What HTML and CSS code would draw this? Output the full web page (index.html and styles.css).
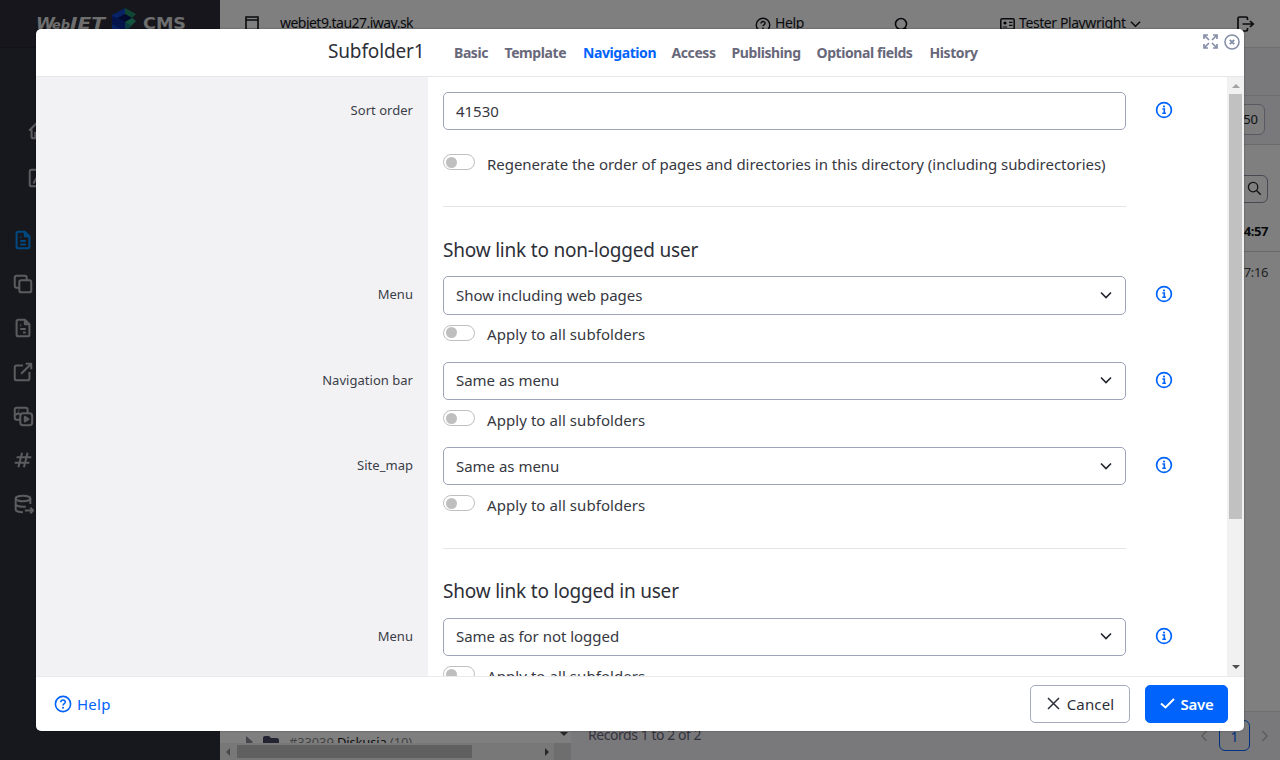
FILE: index.html
```
<!DOCTYPE html>
<html lang="en">
<head>
<meta charset="utf-8">
<title>WebJET CMS</title>
<link rel="stylesheet" href="styles.css">
</head>
<body>
<svg width="0" height="0" class="defs">
  <defs>
    <symbol id="info" viewBox="0 0 18 18"><circle cx="9" cy="9" r="7.4" fill="none" stroke="currentColor" stroke-width="1.7"/><path d="M7.400 8h1.900v4M7.300 12.200h3.600" fill="none" stroke="currentColor" stroke-width="1.600"/><circle cx="9" cy="5.500" r="1.100" fill="currentColor"/></symbol>
    <symbol id="help" viewBox="0 0 18 18"><circle cx="9" cy="9" r="7.6" fill="none" stroke="currentColor" stroke-width="1.6"/><path d="M6.7 7.2c0-3 4.8-2.8 4.6 0C11.2 8.700 9 8.700 9 10.500" fill="none" stroke="currentColor" stroke-width="1.5"/><circle cx="9" cy="12.8" r="1" fill="currentColor"/></symbol>
    <symbol id="chev" viewBox="0 0 12 8"><path d="M1 1.500l5 5 5-5" fill="none" stroke="currentColor" stroke-width="1.6"/></symbol>
    <symbol id="search" viewBox="0 0 16 16"><circle cx="6.500" cy="6.500" r="5" fill="none" stroke="currentColor" stroke-width="1.400"/><path d="M10.200 10.200l4.500 4.500" stroke="currentColor" stroke-width="1.500"/></symbol>
  </defs>
</svg>
<div class="app">
  <aside class="side">
    <div class="brand">
      <svg width="150" height="32" viewBox="0 0 150 32">
        <g fill="#ddd" font-family="DejaVu Sans" font-weight="bold">
          <text x="0" y="29" font-size="16" font-style="italic" textLength="19" lengthAdjust="spacingAndGlyphs">W</text>
          <text x="16" y="29" font-size="12" font-style="italic" textLength="18" lengthAdjust="spacingAndGlyphs">eb</text>
          <text x="34" y="29" font-size="16" font-style="italic" textLength="35" lengthAdjust="spacingAndGlyphs">JET</text>
          <text x="107" y="29" font-size="16" textLength="43" lengthAdjust="spacingAndGlyphs">CMS</text>
        </g>
        <path d="M89 8L76 15v18l13-6z" fill="#1044c8"/><path d="M76 16l13 6v9l-13-7z" fill="#0a2896"/>
        <path d="M89 8l11 6-4 4-7-4z" fill="#208c68"/><path d="M89 14l7 4-7 4-8-4z" fill="#061860"/><path d="M89 22l7-4 4 3-4 4-7 7z" fill="#24a87b"/><path d="M89 22l7 4-7 5z" fill="#187684"/>
      </svg>
    </div>
    <nav class="menu">
      <svg class="mi first" viewBox="0 0 24 24"><path d="M5 12H3l9-9 9 9h-2v7a2 2 0 0 1-2 2H7a2 2 0 0 1-2-2zM9 21v-6h6v6"/></svg>
      <svg class="mi first" viewBox="0 0 24 24"><rect x="3" y="3" width="18" height="18" rx="2"/><path d="M7 18l5-9 4 7 3-6"/></svg>
      <svg class="mi on" viewBox="0 0 24 24"><path d="M14 3v5h5M5 5a2 2 0 0 1 2-2h7l5 5v11a2 2 0 0 1-2 2H7a2 2 0 0 1-2-2zM9 9h1M9 13h6M9 17h6"/></svg>
      <svg class="mi" viewBox="0 0 24 24"><rect x="8" y="8" width="13" height="13" rx="2"/><path d="M16 8V5a2 2 0 0 0-2-2H5a2 2 0 0 0-2 2v9a2 2 0 0 0 2 2h3"/></svg>
      <svg class="mi" viewBox="0 0 24 24"><path d="M14 3v5h5M5 5a2 2 0 0 1 2-2h7l5 5v11a2 2 0 0 1-2 2H7a2 2 0 0 1-2-2zM9 9h1M9 13h6M12 17h3"/></svg>
      <svg class="mi" viewBox="0 0 24 24"><path d="M12 5H5a2 2 0 0 0-2 2v12a2 2 0 0 0 2 2h12a2 2 0 0 0 2-2v-7M10 14L21 3M15 3h6v6"/></svg>
      <svg class="mi" viewBox="0 0 24 24"><rect x="9" y="9" width="13" height="13" rx="3"/><path d="M17 9V5a2 2 0 0 0-2-2H5a2 2 0 0 0-2 2v9a2 2 0 0 0 2 2h4M3 11l4-2 3 2M7 6h1M14 13v5l4-2.500z"/></svg>
      <svg class="mi" viewBox="0 0 24 24"><path d="M5 9h16M3 15h16M11 4L7 20M17 4l-4 16"/></svg>
      <svg class="mi" viewBox="0 0 24 24"><ellipse cx="12" cy="6" rx="8" ry="3"/><path d="M4 6v12c0 1.700 3.600 3 8 3M20 6v6M4 12c0 1.700 3.600 3 8 3 1 0 2 0 3-.3M14 19h9M20 16l3 3-3 3"/></svg>
    </nav>
  </aside>
  <main class="page">
    <header class="top">
      <svg class="win" width="14" height="14" viewBox="0 0 14 14"><path d="M1 1h12v12.500H1zM1 4h12" fill="none" stroke="currentColor" stroke-width="1.600"/></svg>
      <span class="t domain">webjet9.tau27.iway.sk</span>
      <svg class="tophelp" width="16" height="16"><use href="#help"/></svg><span class="t">Help</span>
      <svg class="topsearch" width="15" height="15" viewBox="0 0 15 15"><circle cx="7" cy="7" r="5.500" fill="none" stroke="currentColor" stroke-width="1.600"/><path d="M10.500 10.500l3 3" stroke="currentColor" stroke-width="1.600"/></svg>
      <svg class="card" width="15" height="12" viewBox="0 0 15 12"><rect x=".8" y=".8" width="13.400" height="10.400" rx="1.500" fill="none" stroke="currentColor" stroke-width="1.500"/><circle cx="5" cy="5" r="1.600"/><path d="M2.800 9h4.400M9 4.300h3.500M9 7.300h3.500" stroke="currentColor" stroke-width="1.200"/></svg><span class="t user">Tester Playwright</span><svg class="userchev" width="11" height="8"><use href="#chev"/></svg>
      <svg class="exit" width="18" height="16" viewBox="0 0 18 16"><path d="M10.500 4V2.500a1.500 1.500 0 0 0-1.500-1.500H2.500A1.500 1.500 0 0 0 1 2.500v11A1.500 1.500 0 0 0 2.500 15H9a1.500 1.500 0 0 0 1.500-1.500V12M5.500 8H16M13 5l3.200 3L13 11" fill="none" stroke="currentColor" stroke-width="1.700"/></svg>
    </header>
    <div class="strip"></div>
    <div class="tools"><span class="num">50</span></div>
    <div class="table">
      <div class="filter"><span class="fbox"><svg width="15" height="15"><use href="#search"/></svg></span></div>
      <div class="tr strong">4:57</div>
      <div class="tr">7:16</div>
    </div>
    <div class="bottom">
      <div class="tree">
        <div class="node"><svg width="7" height="11"><path d="M0 0l7 6-7 5z" fill="#8a8b98"/></svg><svg width="16" height="12"><path d="M0 2q0-2 2-2h4l2 2h6q2 0 2 2v8H0z" fill="#464963"/></svg><span>#33039 <b>Diskusia</b> (10)</span><i class="tri down"></i></div>
        <div class="hbar"><i class="tri left"></i><span class="hthumb"></span><i class="tri right"></i><span class="corner"></span></div>
      </div>
      <div class="records"><span class="rec">Records 1 to 2 of 2</span><svg class="pg" width="8" height="12" viewBox="0 0 8 12"><path d="M6.500 1L2 6l4.500 5"/></svg><span class="one">1</span><svg class="pg" width="8" height="12" viewBox="0 0 8 12"><path d="M1.500 1L6 6l-4.500 5"/></svg></div>
    </div>
  </main>
</div>
<div class="shade"></div>
<section class="modal">
  <header class="mhead">
    <h1>Subfolder1</h1>
    <nav class="tabs"><a class="w1">Basic</a><a class="w2">Template</a><a class="w3 active">Navigation</a><a class="w4">Access</a><a class="w5">Publishing</a><a class="w6">Optional fields</a><a class="w7">History</a></nav>
    <div class="winbtns">
      <svg width="15" height="15" viewBox="0 0 15 15"><path d="M1 5V1h4M10 1h4v4M14 10v4h-4M5 14H1v-4M1.500 1.500L6 6M13.500 1.500L9 6M13.500 13.500L9 9M1.500 13.500L6 9" fill="none" stroke="currentColor" stroke-width="1.700"/></svg>
      <svg width="16" height="16" viewBox="0 0 16 16"><circle cx="8" cy="8" r="7" fill="none" stroke="currentColor" stroke-width="1.600"/><path d="M5.800 5.800l4.400 4.400M10.200 5.800l-4.400 4.400" stroke="currentColor" stroke-width="1.900"/></svg>
    </div>
  </header>
  <div class="mbody">
    <div class="form">
      <div class="group">
        <div class="row">
          <label>Sort order</label>
          <div class="field"><div class="input">41530</div><div class="check regen"><span class="switch"></span><span class="long">Regenerate the order of pages and directories in this directory (including subdirectories)</span></div></div>
          <svg class="info"><use href="#info"/></svg>
        </div>
        <hr>
      </div>
      <h2>Show link to non-logged user</h2>
      <div class="row sel"><label>Menu</label><div class="field"><div class="input">Show including web pages<svg class="chev"><use href="#chev"/></svg></div><div class="check"><span class="switch"></span><span>Apply to all subfolders</span></div></div><svg class="info"><use href="#info"/></svg></div>
      <div class="row sel"><label>Navigation bar</label><div class="field"><div class="input">Same as menu<svg class="chev"><use href="#chev"/></svg></div><div class="check"><span class="switch"></span><span>Apply to all subfolders</span></div></div><svg class="info"><use href="#info"/></svg></div>
      <div class="row sel"><label>Site_map</label><div class="field"><div class="input">Same as menu<svg class="chev"><use href="#chev"/></svg></div><div class="check"><span class="switch"></span><span>Apply to all subfolders</span></div></div><svg class="info"><use href="#info"/></svg></div>
      <hr class="second">
      <h2>Show link to logged in user</h2>
      <div class="row sel"><label>Menu</label><div class="field"><div class="input">Same as for not logged<svg class="chev"><use href="#chev"/></svg></div><div class="check"><span class="switch"></span><span>Apply to all subfolders</span></div></div><svg class="info"><use href="#info"/></svg></div>
    </div>
    <div class="vbar"><i class="tri up"></i><span class="vthumb"></span><i class="tri down"></i></div>
  </div>
  <footer class="mfoot">
    <a class="helplink"><svg width="18" height="18"><use href="#help"/></svg>Help</a>
    <button class="btn"><svg width="13" height="13" viewBox="0 0 13 13"><path d="M1 1l11 11M12 1L1 12" stroke="currentColor" stroke-width="1.500"/></svg>Cancel</button>
    <button class="btn save"><svg width="15" height="11" viewBox="0 0 15 11"><path d="M1 5.500l4.500 4L14 1" fill="none" stroke="currentColor" stroke-width="2"/></svg>Save</button>
  </footer>
</section>
</body>
</html>
```
FILE: styles.css
```
* { box-sizing: border-box; }
body { margin: 0; width: 1280px; height: 760px; overflow: hidden; position: relative; font-family: "Noto Sans", sans-serif; font-size: 15px; color: #212529; }
svg { display: block; flex: none; }
.defs { position: absolute; }

.app { display: flex; height: 760px; }
.side { width: 220px; background: #2e303c; }
.brand { height: 48px; padding-left: 36px; background: #2c2d38; border-bottom: 1px solid #23242e; }
.menu { padding: 71px 0 0 12px; display: flex; flex-direction: column; }
.mi { width: 22px; height: 22px; margin-bottom: 22px; fill: none; stroke: #b8b8be; stroke-width: 2.2; stroke-linejoin: round; }
.mi.first { margin: 0 0 26px 15px; }
.mi.first + .mi.on { margin-top: 14px; }
.mi.on { stroke: #0090ff; }

.page { flex: 1; display: flex; flex-direction: column; background: #fff; min-width: 0; }
.top { height: 48px; display: flex; border-bottom: 1px solid #dcdde0; padding: 16px 0 0 25px; color: #13151b; }
.t { font-size: 14px; line-height: 14px; white-space: nowrap; letter-spacing: -.35px; }
.domain { margin-left: 21px; width: 134px; letter-spacing: -.53px; }
.tophelp { margin: 1px 4px 0 341px; }
.topsearch { margin: 1px 0 0 90px; }
.card { margin: 2px 4px 0 91px; }
.user { width: 108px; letter-spacing: -.42px; }
.userchev { margin: 4px 0 0 3px; }
.exit { margin-left: 96px; }
.strip { height: 48px; background: #f3f3f6; border-bottom: 1px solid #dcdde0; }
.tools { height: 49px; background: #f3f3f6; border-bottom: 1px solid #d2d4dc; display: flex; justify-content: flex-end; padding: 8px 15px; }
.num { width: 45px; height: 31px; border: 1px solid #b0b3c5; border-radius: 6px; text-align: right; padding-right: 6px; line-height: 29px; font-size: 13px; background: #fafafa; }
.table { height: 566px; }
.filter { height: 66px; padding: 30px 12px 0; display: flex; justify-content: flex-end; }
.fbox { width: 50px; height: 28px; border: 1px solid #8d91a8; border-radius: 6px; display: flex; justify-content: flex-end; padding: 5px 5px; }
.tr { height: 41px; padding-right: 12px; text-align: right; line-height: 41px; font-size: 13px; letter-spacing: -.4px; color: #444; }
.strong { font-weight: 700; color: #13151b; border-bottom: 1px solid #cfd0d8; }
.bottom { flex: 1; display: flex; }
.tree { width: 351px; background: #fff; }
.node { height: 32px; padding: 25px 3px 0 26px; display: flex; font-size: 13px; line-height: 13px; color: #888; overflow: hidden; gap: 10px; letter-spacing: -.15px; }
.node span { width: 265px; white-space: nowrap; }
.node b { font-weight: 400; color: #222; }
.node .tri { margin: -4px 0 0 -3px; }
.hbar { height: 17px; background: #f1f1f1; display: flex; align-items: center; padding-left: 6px; }
.hthumb { width: 235px; height: 13px; background: #c1c1c1; margin-left: 7px; }
.hbar .right { margin-left: 73px; }
.corner { width: 17px; height: 17px; background: #dcdcdc; margin-left: auto; }
.records { flex: 1; background: #f3f3f6; border-top: 1px solid #dcdde0; display: flex; padding: 16px 11px 0 17px; color: #68687a; }
.rec { margin-right: auto; font-size: 14px; line-height: 14px; letter-spacing: -.45px; }
.pg { fill: none; stroke: #bbb; stroke-width: 1.5; margin-top: 2px; }
.one { width: 31px; height: 31px; margin: -8px 11px 0; border: 1px solid #0063fb; border-radius: 6px; text-align: center; line-height: 31px; font-size: 14px; color: #0063fb; }

.tri { display: block; width: 0; height: 0; border: 4px solid transparent; flex: none; }
.tri.up { border-top: 0; border-bottom-color: #a3a3a3; }
.tri.down { border-bottom: 0; border-top-color: #505050; }
.tri.left { border-left: 0; border-right-color: #909090; }
.tri.right { border-right: 0; border-left-color: #505050; }

.shade { position: absolute; inset: 0; background: rgba(0, 0, 0, .5); }
.modal { position: absolute; left: 36px; top: 29px; width: 1208px; height: 702px; background: #fff; border-radius: 5px; overflow: hidden; display: flex; flex-direction: column; box-shadow: 0 0 2px rgba(0, 0, 0, .4); }
.mhead { height: 48px; border-bottom: 1px solid #e6e7ea; display: flex; padding-left: 292px; flex: none; }
h1 { margin: 0; width: 126px; font-size: 19px; font-weight: 400; line-height: 44px; letter-spacing: -.15px; color: #2d2f38; }
.tabs { display: flex; font-size: 14px; font-weight: 700; line-height: 47px; color: #68687a; letter-spacing: -.42px; white-space: nowrap; }
.w1 { width: 50.5px; }
.w2 { width: 78.5px; }
.w3 { width: 88.5px; }
.w4 { width: 60px; }
.w5 { width: 85px; }
.w6 { width: 113px; }
.w7 { width: 50px; }
.active { color: #0063fb; }
.winbtns { margin-left: auto; padding: 5px 4px 0 0; display: flex; gap: 6px; color: #868ea8; }
.mbody { height: 599px; flex: none; display: flex; overflow: hidden; }
.form { flex: 1; padding-top: 15px; background: linear-gradient(to right, #f2f2f5 392px, #fff 392px); }
.group { height: 115.4px; }
.row { display: grid; grid-template-columns: 377px 30px 683px 29px 18px; height: 114.4px; }
.row label { grid-column: 1; text-align: right; font-size: 13px; line-height: 37px; letter-spacing: .03px; color: #3b3d48; }
.sel { height: 85.33px; }
.field { grid-column: 3; }
.info { grid-column: 5; width: 18px; height: 18px; margin: 9px 0 0 -.5px; color: #0063fb; }
.input { height: 38.4px; border: 1px solid #9da4b8; border-radius: 5px; padding: 0 12px; display: flex; align-items: center; justify-content: space-between; letter-spacing: -.02px; color: #363841; }
.sel .input { padding-bottom: 1px; }
.chev { width: 12px; height: 8px; margin-right: 1px; color: #22242c; }
.check { height: 20px; margin-top: 9.4px; display: flex; align-items: center; gap: 12px; line-height: 20px; letter-spacing: .07px; color: #363841; white-space: nowrap; }
.check.regen { margin-top: 23.6px; }
.long { letter-spacing: -.03px; }
.switch { width: 32px; height: 16px; border: 1px solid #bfbfbf; border-radius: 8px; padding: 1.5px 2px; margin-top: -3px; flex: none; }
.switch::before { content: ""; display: block; width: 11px; height: 11px; border-radius: 50%; background: #bfbfbf; }
hr { margin: 0 0 0 407px; width: 683px; height: 1px; border: 0; background: #e4e4e7; }
hr.second { margin-top: 15.4px; }
h2 { margin: 0 0 0 407px; height: 69px; padding-top: 27.4px; font-size: 19px; line-height: 31px; font-weight: 400; letter-spacing: -.2px; color: #2d2f38; }
.vbar { width: 17px; background: #f1f1f1; display: flex; flex-direction: column; align-items: center; padding: 7px 0; }
.vthumb { width: 13px; height: 425px; margin-top: 6px; background: #c1c1c1; }
.vbar .down { margin-top: auto; }
.mfoot { flex: 1; border-top: 1px solid #e9e9ee; display: flex; padding: 8px 16px 0 18px; }
.helplink { display: flex; gap: 5px; align-items: center; height: 38px; margin-right: auto; letter-spacing: .25px; color: #0063fb; }
.btn { font: 15px "Noto Sans", sans-serif; width: 100px; height: 38px; border: 1px solid #a6acbd; border-radius: 5px; background: #fff; display: flex; align-items: center; justify-content: center; gap: 7px; padding: 0 0 1px 1px; letter-spacing: .15px; color: #2d2f38; }
.save { width: 83px; margin-left: 15px; background: #0063fb; border-color: #0063fb; color: #fff; font-weight: 600; gap: 5px; letter-spacing: -.2px; }
```
